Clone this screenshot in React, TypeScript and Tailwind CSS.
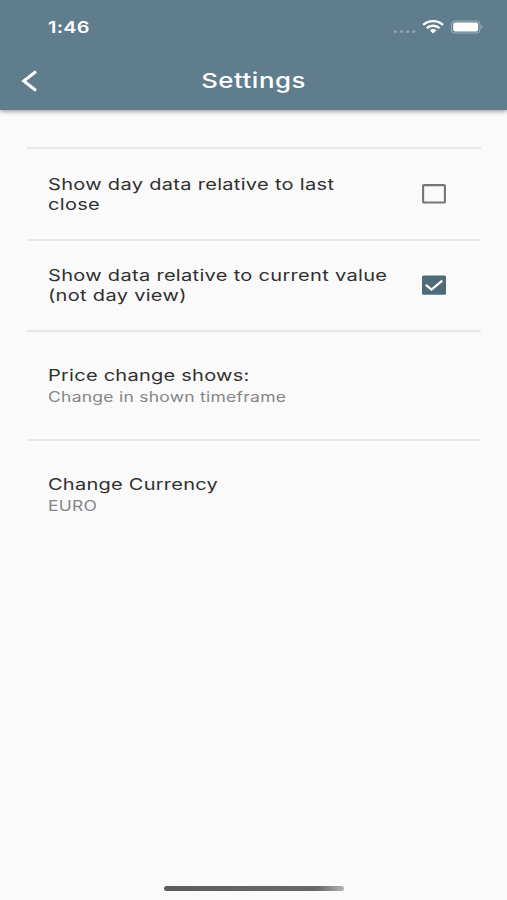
import type { ReactNode } from "react";

function StatusIcons() {
  return (
    <svg width="92" height="16" viewBox="0 0 92 16" fill="none" className="block">
      <g fill="#fff" fillOpacity="0.28">
        <ellipse cx="3.3" cy="12.6" rx="1.8" ry="1.5" />
        <ellipse cx="9.5" cy="12.6" rx="1.8" ry="1.5" />
        <ellipse cx="15.7" cy="12.6" rx="1.8" ry="1.5" />
        <ellipse cx="21.8" cy="12.6" rx="1.8" ry="1.5" />
      </g>
      <g stroke="#fff" strokeWidth="2.4">
        <path d="M31.2 5.8C36.9.9 45.3.9 51 5.8" />
        <path d="M34.7 9.1C38.3 6 43.9 6 47.5 9.1" />
      </g>
      <path d="M37.8 11.2c1.9-1.5 4.7-1.5 6.6 0L41.1 14.4z" fill="#fff" />
      <rect x="59.4" y="2" width="28.6" height="12" rx="3.4" stroke="#fff" strokeOpacity="0.4" />
      <rect x="61.2" y="3.6" width="25" height="8.8" rx="1.8" fill="#fff" />
      <path d="M89.3 6.2c1.6.4 1.6 3.2 0 3.7z" fill="#fff" fillOpacity="0.45" />
    </svg>
  );
}

function Checkbox({ checked }: { checked: boolean }) {
  return (
    <svg
      width="24"
      height="20"
      viewBox="0 0 24 20"
      fill="none"
      className="block shrink-0"
      role="checkbox"
      aria-checked={checked}
    >
      {checked ? (
        <>
          <rect y="0.4" width="24" height="19.4" rx="1.5" fill="#4f6b7a" />
          <path d="M3.8 9.9L9.5 14.5L20.3 5.6" stroke="#fff" strokeWidth="2.2" />
        </>
      ) : (
        <rect x="1.1" y="1.1" width="21.8" height="17.4" rx="0.8" stroke="#757575" strokeWidth="2.1" />
      )}
    </svg>
  );
}

function Line({ children }: { children: ReactNode }) {
  return <span className="block w-max origin-left scale-x-[1.25]">{children}</span>;
}

type RowProps = {
  lines: string[];
  checked: boolean;
};

function CheckRow({ lines, checked }: RowProps) {
  return (
    <div className="flex h-[91.5px] items-center justify-between border-t-2 border-[#e8e8e8] pl-[21px] pr-[35px]">
      <div className="text-[16px] leading-5 tracking-[0.25px] text-[#303030]">
        {lines.map((line) => (
          <Line key={line}>{line}</Line>
        ))}
      </div>
      <Checkbox checked={checked} />
    </div>
  );
}

function ValueRow({ title, value }: { title: string; value: string }) {
  return (
    <div className="h-[108.5px] border-t-2 border-[#e8e8e8] pl-[21px] pt-8">
      <div className="text-[16px] leading-[22px] tracking-[0.2px] text-[#303030]">
        <Line>{title}</Line>
      </div>
      <div className="text-[14px] leading-[22px] tracking-[0.2px] text-[#858585]">
        <Line>{value}</Line>
      </div>
    </div>
  );
}

export default function App() {
  return (
    <div className="flex h-[900px] w-[507px] flex-col overflow-hidden bg-[#fafafa] font-['Inter',sans-serif]">
      <header className="h-[110px] shrink-0 bg-[#607d8d] text-white shadow-[0_1px_5px_rgba(0,0,0,0.45)]">
        <div className="flex h-[54px] items-center justify-between pl-12 pr-[23px]">
          <span className="block origin-left scale-x-[1.24] text-[16px] font-semibold tracking-[0.2px]">1:46</span>
          <StatusIcons />
        </div>
        <div className="grid h-[54px] grid-cols-[60px_1fr_60px] items-center">
          <svg width="18" height="22" viewBox="0 0 18 22" fill="none" className="ml-[21px] block">
            <path d="M15 1.5L2.7 11L15 20.5" stroke="#fff" strokeWidth="3" />
          </svg>
          <h1 className="scale-x-[1.26] text-center text-[20.5px] font-medium tracking-[0.4px]">Settings</h1>
        </div>
      </header>

      <main className="grow pl-[27px] pr-[26px] pt-[37px]">
        <CheckRow lines={["Show day data relative to last", "close"]} checked={false} />
        <CheckRow lines={["Show data relative to current value", "(not day view)"]} checked />
        <ValueRow title="Price change shows:" value="Change in shown timeframe" />
        <ValueRow title="Change Currency" value="EURO" />
      </main>

      <div className="flex h-[14px] shrink-0 justify-center pl-px">
        <div className="h-[5px] w-[180px] rounded-full bg-linear-to-r from-[#5c5c5c] from-0% via-[#686868] via-85% to-[#b5b5b5]" />
      </div>
    </div>
  );
}
